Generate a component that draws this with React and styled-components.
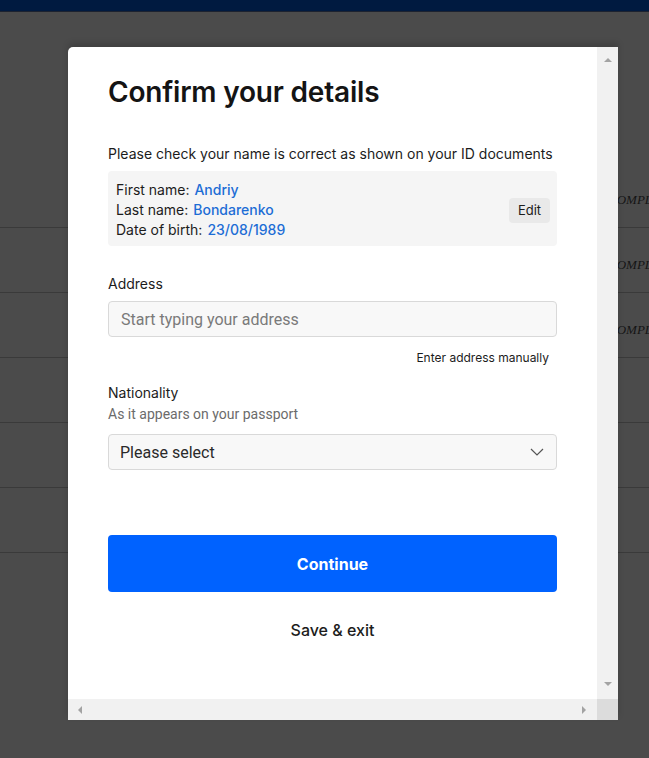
import React from "react";
import styled, {createGlobalStyle} from "styled-components";


const GlobalStyle = createGlobalStyle`
  body {
    margin: 0;
    background: #4b4b4b;
    font-family: "Inter", "Liberation Sans", sans-serif;
  }
`;


const Page = styled.div`
  position: relative;
  height: 758px;
  overflow: hidden;
  background: #4b4b4b;
`;


const TopBar = styled.div`
  height: 11px;
  background: #001a40;
  border-bottom: 1px solid #1c2230;
`;


const Table = styled.div`
  margin-top: 151px;
  display: flex;
  flex-direction: column;
`;


const TableRow = styled.div`
  height: 65px;
  border-bottom: 1px solid #3a3a3a;
  display: flex;
  align-items: center;
  padding-left: 608px;
  box-sizing: border-box;
  overflow: hidden;
  white-space: nowrap;
`;


const StatusText = styled.span`
  font-family: "Liberation Serif", serif;
  font-style: italic;
  font-size: 13px;
  color: #151515;
  margin-top: 9px;
`;


const Modal = styled.div`
  position: absolute;
  top: 47px;
  left: 68px;
  width: 550px;
  height: 673px;
  background: #ffffff;
  border-radius: 5px 0 0 0;
  box-shadow: 0 -4px 6px rgba(0, 0, 0, 0.15);
  display: grid;
  grid-template-columns: 1fr 21px;
  grid-template-rows: 1fr 21px;
  overflow: hidden;
`;


const Content = styled.div`
  padding: 27px 40px 0 40px;
  overflow: hidden;
  display: flex;
  flex-direction: column;
`;


const Title = styled.h1`
  margin: 0;
  font-size: 28px;
  line-height: 36px;
  font-weight: 600;
  color: #141414;
  letter-spacing: -0.2px;
`;


const Text = styled.p`
  margin: ${props => props.$mt || 0}px 0 0 0;
  font-size: ${props => props.$size || 14}px;
  line-height: ${props => props.$lh || 20}px;
  color: ${props => props.$color || "#1c1c1c"};
  font-family: ${props => props.$roboto ? "Roboto, \"Liberation Sans\", sans-serif" : "inherit"};
  text-align: ${props => props.$align || "left"};
  padding-right: ${props => props.$pr || 0}px;
  font-weight: ${props => props.$weight || 400};
`;


const InfoBox = styled.div`
  margin-top: 7px;
  background: #f5f5f5;
  border-radius: 4px;
  padding: 9px 7px 6px 8px;
  display: flex;
  align-items: center;
  justify-content: space-between;
`;


const InfoList = styled.div`
  display: flex;
  flex-direction: column;
`;


const InfoLine = styled.div`
  font-size: 14px;
  line-height: 20px;
  color: #1c1c1c;
`;


const InfoValue = styled.span`
  color: #1d6dd5;
  font-weight: 500;
  margin-left: 5px;
`;


const EditButton = styled.button`
  width: 41px;
  height: 25px;
  border: none;
  border-radius: 4px;
  background: #e9e9e9;
  font-family: inherit;
  font-size: 13px;
  color: #1c1c1c;
  padding: 0;
`;


const Field = styled.div`
  margin-top: ${props => props.$mt}px;
  height: 36px;
  box-sizing: border-box;
  border: 1px solid #d9d9d9;
  border-radius: 4px;
  background: #f8f8f8;
  display: flex;
  align-items: center;
  justify-content: space-between;
  padding: 0 12px 0 ${props => props.$pl}px;
  font-family: Roboto, "Liberation Sans", sans-serif;
  font-size: 16px;
  color: ${props => props.$color};
`;


const PrimaryButton = styled.button`
  margin-top: 65px;
  height: 57px;
  border: none;
  border-radius: 4px;
  background: #0062ff;
  color: #ffffff;
  font-family: inherit;
  font-size: 16px;
  font-weight: 700;
`;


const VScroll = styled.div`
  background: #f1f1f1;
  display: flex;
  flex-direction: column;
  justify-content: space-between;
  align-items: center;
  padding: 8px 0 10px;
`;


const HScroll = styled.div`
  background: #f1f1f1;
  display: flex;
  justify-content: space-between;
  align-items: center;
  padding: 0 8px 0 7px;
`;


const Corner = styled.div`
  background: #dcdcdc;
`;


const Arrow = ({dir}) => {
    const points = {
        up: "1,7 5,3 9,7",
        down: "1,3 5,7 9,3",
        left: "7,1 3,5 7,9",
        right: "3,1 7,5 3,9"
    };
    return (
        <svg width="10" height="10" viewBox="0 0 10 10">
            <polygon points={points[dir]} fill="#a3a3a3"/>
        </svg>
    );
};


const Chevron = () => (
    <svg width="14" height="8" viewBox="0 0 14 8">
        <polyline points="1,1 7,7 13,1" fill="none" stroke="#555" strokeWidth="1.2"/>
    </svg>
);


const App = () => {
    const rows = ["COMPLETE", "COMPLETE", "COMPLETE", "", "", ""];

    return (
        <Page>
            <GlobalStyle/>
            <TopBar/>
            <Table>
                {rows.map((label, i) => (
                    <TableRow key={i}>
                        {label && <StatusText>{label}</StatusText>}
                    </TableRow>
                ))}
            </Table>

            <Modal>
                <Content>
                    <Title>Confirm your details</Title>
                    <Text $mt={34}>Please check your name is correct as shown on your ID documents</Text>

                    <InfoBox>
                        <InfoList>
                            <InfoLine>First name:<InfoValue>Andriy</InfoValue></InfoLine>
                            <InfoLine>Last name:<InfoValue>Bondarenko</InfoValue></InfoLine>
                            <InfoLine>Date of birth:<InfoValue>23/08/1989</InfoValue></InfoLine>
                        </InfoList>
                        <EditButton>Edit</EditButton>
                    </InfoBox>

                    <Text $mt={28}>Address</Text>
                    <Field $mt={7} $pl={12} $color="#7a7a7a">Start typing your address</Field>
                    <Text $mt={13} $size={12} $lh={16} $align="right" $pr={8}>Enter address manually</Text>

                    <Text $mt={17}>Nationality</Text>
                    <Text $mt={1} $color="#6b6b6b" $roboto>As it appears on your passport</Text>
                    <Field $mt={10} $pl={11} $color="#2a2a2a">
                        Please select
                        <Chevron/>
                    </Field>

                    <PrimaryButton>Continue</PrimaryButton>
                    <Text $mt={27} $size={16} $lh={22} $align="center" $weight={500}>Save &amp; exit</Text>
                </Content>

                <VScroll>
                    <Arrow dir="up"/>
                    <Arrow dir="down"/>
                </VScroll>
                <HScroll>
                    <Arrow dir="left"/>
                    <Arrow dir="right"/>
                </HScroll>
                <Corner/>
            </Modal>
        </Page>
    );
};


export default App;
